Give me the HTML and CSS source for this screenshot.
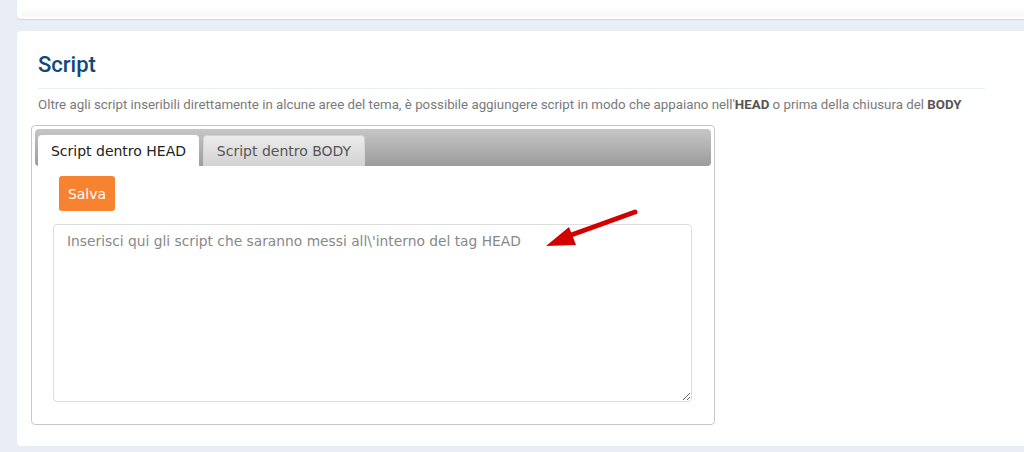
FILE: index.html
```html
<!DOCTYPE html>
<html lang="it">
<head>
<meta charset="utf-8">
<title>Script</title>
<link rel="stylesheet" href="styles.css">
</head>
<body>
<div class="page">
  <div class="card card-top"><div class="card-top-inner"></div></div>
  <div class="card card-main">
    <h2 class="title">Script</h2>
    <p class="desc">Oltre agli script inseribili direttamente in alcune aree del tema, è possibile aggiungere script in modo che appaiano nell'<b>HEAD</b> o prima della chiusura del <b>BODY</b></p>
    <div class="tabs">
      <div class="tab-bar">
        <div class="tab active">Script dentro HEAD</div>
        <div class="tab">Script dentro BODY</div>
      </div>
      <div class="tab-panel">
        <button class="btn-save">Salva</button>
        <textarea class="code" placeholder="Inserisci qui gli script che saranno messi all\'interno del tag HEAD"></textarea>
      </div>
    </div>
  </div>
</div>
<svg class="arrow" width="1024" height="452" viewBox="0 0 1024 452">
  <line x1="635" y1="212" x2="560" y2="239" stroke="#d30000" stroke-width="5" stroke-linecap="round"/>
  <polygon points="546,246 569,227 576,245" fill="#d30000"/>
</svg>
</body>
</html>
```
FILE: styles.css
```css
html, body {
  margin: 0;
  padding: 0;
}
body {
  background: #e9eef6;
  font-family: Roboto, "Liberation Sans", sans-serif;
  width: 1024px;
  height: 452px;
  overflow: hidden;
  position: relative;
}
.page {
  padding-left: 17px;
  display: flex;
  flex-direction: column;
  gap: 12px;
}
.card {
  background: #fff;
  border-radius: 4px;
  margin-right: -20px;
}
.card-top {
  height: 19px;
  border-radius: 0 0 4px 4px;
  box-shadow: 0 1px 1px rgba(120, 140, 170, 0.25);
  padding: 0 0 0 5px;
  box-sizing: border-box;
}
.card-top-inner {
  height: 17px;
  background: linear-gradient(#fff 0%, #fff 30%, #f7f8fa 100%);
}
.card-main {
  height: 415px;
  box-sizing: border-box;
  padding: 20px 21px 0;
}
.title {
  margin: 0;
  font-size: 22px;
  line-height: 28px;
  font-weight: 500;
  color: #104a7a;
  padding-bottom: 9px;
  border-bottom: 1px solid #e8eef5;
  width: 947px;
}
.desc {
  margin: 7px 0 11px;
  font-size: 13.3px;
  line-height: 18px;
  color: #7a7a7a;
}
.desc b {
  color: #555;
  font-weight: 700;
}
.tabs {
  margin-left: -7px;
  width: 684px;
  height: 300px;
  box-sizing: border-box;
  border: 1px solid #c8c8c8;
  border-radius: 4px;
  padding: 3px;
  font-family: "DejaVu Sans", Verdana, sans-serif;
}
.tab-bar {
  height: 37px;
  box-sizing: border-box;
  padding: 6px 3px 0;
  display: flex;
  gap: 4px;
  align-items: flex-end;
  background: linear-gradient(#c6c6c6, #9c9c9c);
  border-radius: 4px;
}
.tab {
  height: 31px;
  box-sizing: border-box;
  width: 162px;
  padding-top: 7px;
  text-align: center;
  font-size: 14px;
  color: #555;
  background: linear-gradient(#ececec, #d2d2d2);
  border-radius: 4px 4px 0 0;
  border: 1px solid #d3d3d3;
  border-bottom: none;
}
.tab.active {
  width: 161px;
  background: #fff;
  color: #222;
  border-color: #fff;
}
.tab-panel {
  padding: 10px 0 0 18px;
  display: flex;
  flex-direction: column;
  align-items: flex-start;
}
.btn-save {
  margin-left: 6px;
  width: 56px;
  height: 35px;
  border: none;
  border-radius: 3px;
  background: #f78331;
  color: #fff;
  font-family: "DejaVu Sans", Verdana, sans-serif;
  font-size: 14px;
  padding: 0;
}
.code {
  margin-top: 13px;
  width: 639px;
  height: 178px;
  box-sizing: border-box;
  border: 1px solid #dcdcdc;
  border-radius: 4px;
  padding: 8px 13px;
  font-family: "DejaVu Sans", Verdana, sans-serif;
  font-size: 13.8px;
  line-height: 17px;
  resize: vertical;
}
.code::placeholder {
  color: #888;
}
.arrow {
  position: absolute;
  left: 0;
  top: 0;
  pointer-events: none;
}
```
